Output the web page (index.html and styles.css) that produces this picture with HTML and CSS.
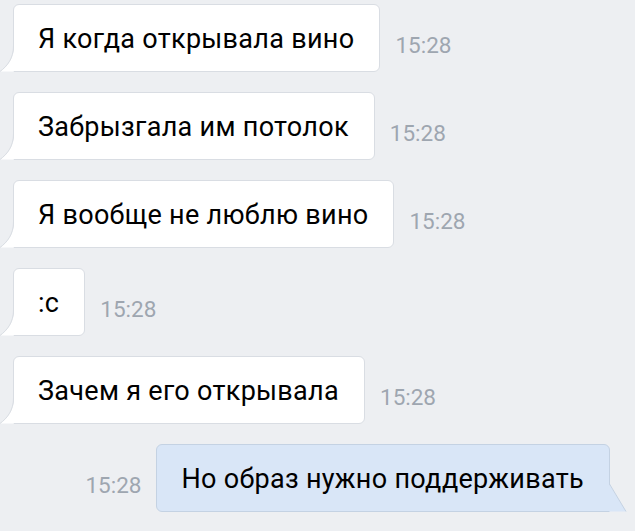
FILE: index.html
```html
<!DOCTYPE html>
<html lang="ru">
<head>
  <meta charset="UTF-8" />
  <meta name="viewport" content="width=device-width, initial-scale=1" />
  <title>Сообщения</title>
  <link rel="stylesheet" href="styles.css">
</head>
<body>
  <div class="chat">
    <div class="row in">
      <div class="bubble">
        Я когда открывала вино
        <svg class="tail" width="16" height="26" viewBox="0 0 16 26"><path d="M14 0 C14 12 8 20 0 25.5 L14 25.5 Z" fill="#fff"/><path d="M13.5 0 C13.5 12 7.5 20 0 25.5" fill="none" stroke="#d9dde3"/></svg>
      </div>
      <span class="time">15:28</span>
    </div>
    <div class="row in">
      <div class="bubble">
        Забрызгала им потолок
        <svg class="tail" width="16" height="26" viewBox="0 0 16 26"><path d="M14 0 C14 12 8 20 0 25.5 L14 25.5 Z" fill="#fff"/><path d="M13.5 0 C13.5 12 7.5 20 0 25.5" fill="none" stroke="#d9dde3"/></svg>
      </div>
      <span class="time">15:28</span>
    </div>
    <div class="row in">
      <div class="bubble">
        Я вообще не люблю вино
        <svg class="tail" width="16" height="26" viewBox="0 0 16 26"><path d="M14 0 C14 12 8 20 0 25.5 L14 25.5 Z" fill="#fff"/><path d="M13.5 0 C13.5 12 7.5 20 0 25.5" fill="none" stroke="#d9dde3"/></svg>
      </div>
      <span class="time">15:28</span>
    </div>
    <div class="row in">
      <div class="bubble">
        :с
        <svg class="tail" width="16" height="26" viewBox="0 0 16 26"><path d="M14 0 C14 12 8 20 0 25.5 L14 25.5 Z" fill="#fff"/><path d="M13.5 0 C13.5 12 7.5 20 0 25.5" fill="none" stroke="#d9dde3"/></svg>
      </div>
      <span class="time">15:28</span>
    </div>
    <div class="row in">
      <div class="bubble">
        Зачем я его открывала
        <svg class="tail" width="16" height="26" viewBox="0 0 16 26"><path d="M14 0 C14 12 8 20 0 25.5 L14 25.5 Z" fill="#fff"/><path d="M13.5 0 C13.5 12 7.5 20 0 25.5" fill="none" stroke="#d9dde3"/></svg>
      </div>
      <span class="time">15:28</span>
    </div>
    <div class="row out">
      <span class="time">15:28</span>
      <div class="bubble">
        Но образ нужно поддерживать
        <svg class="tail" width="19" height="28" viewBox="0 0 19 28"><path d="M1 0 L1 27.5 L18 27.5 Z" fill="#d9e6f7"/><path d="M1.5 0 L18 27.5" fill="none" stroke="#c4d2e3"/></svg>
      </div>
    </div>
  </div>
</body>
</html>
```

FILE: styles.css
```css
body {
  margin: 0;
  font-family: Roboto, "Noto Sans", sans-serif;
  background-color: #edeff2;
  color: #000;
}

.chat {
  display: flex;
  flex-direction: column;
  gap: 20px;
  padding-top: 4px;
}

.row {
  display: flex;
  align-items: center;
  height: 68px;
}

.row.in {
  padding-left: 13px;
}

.row.out {
  justify-content: flex-end;
  padding-right: 25px;
}

.bubble {
  position: relative;
  box-sizing: border-box;
  height: 68px;
  display: flex;
  align-items: center;
  padding: 2px 25px 0 24px;
  font-size: 27px;
  letter-spacing: 0.3px;
  background-color: #fff;
  border: 1px solid #d9dde3;
  border-radius: 6px;
}

.in .bubble {
  border-bottom-left-radius: 0;
}

.out .bubble {
  background-color: #d9e6f7;
  border-color: #c4d2e3;
  border-bottom-right-radius: 0;
}

.tail {
  position: absolute;
  bottom: -1px;
}

.in .tail {
  left: -14px;
}

.out .tail {
  right: -18px;
}

.time {
  font-size: 22.5px;
  color: #9ea6b0;
  margin-top: 14px;
}

.in .time {
  margin-left: 15px;
}

.out .time {
  margin-right: 15px;
}
```
